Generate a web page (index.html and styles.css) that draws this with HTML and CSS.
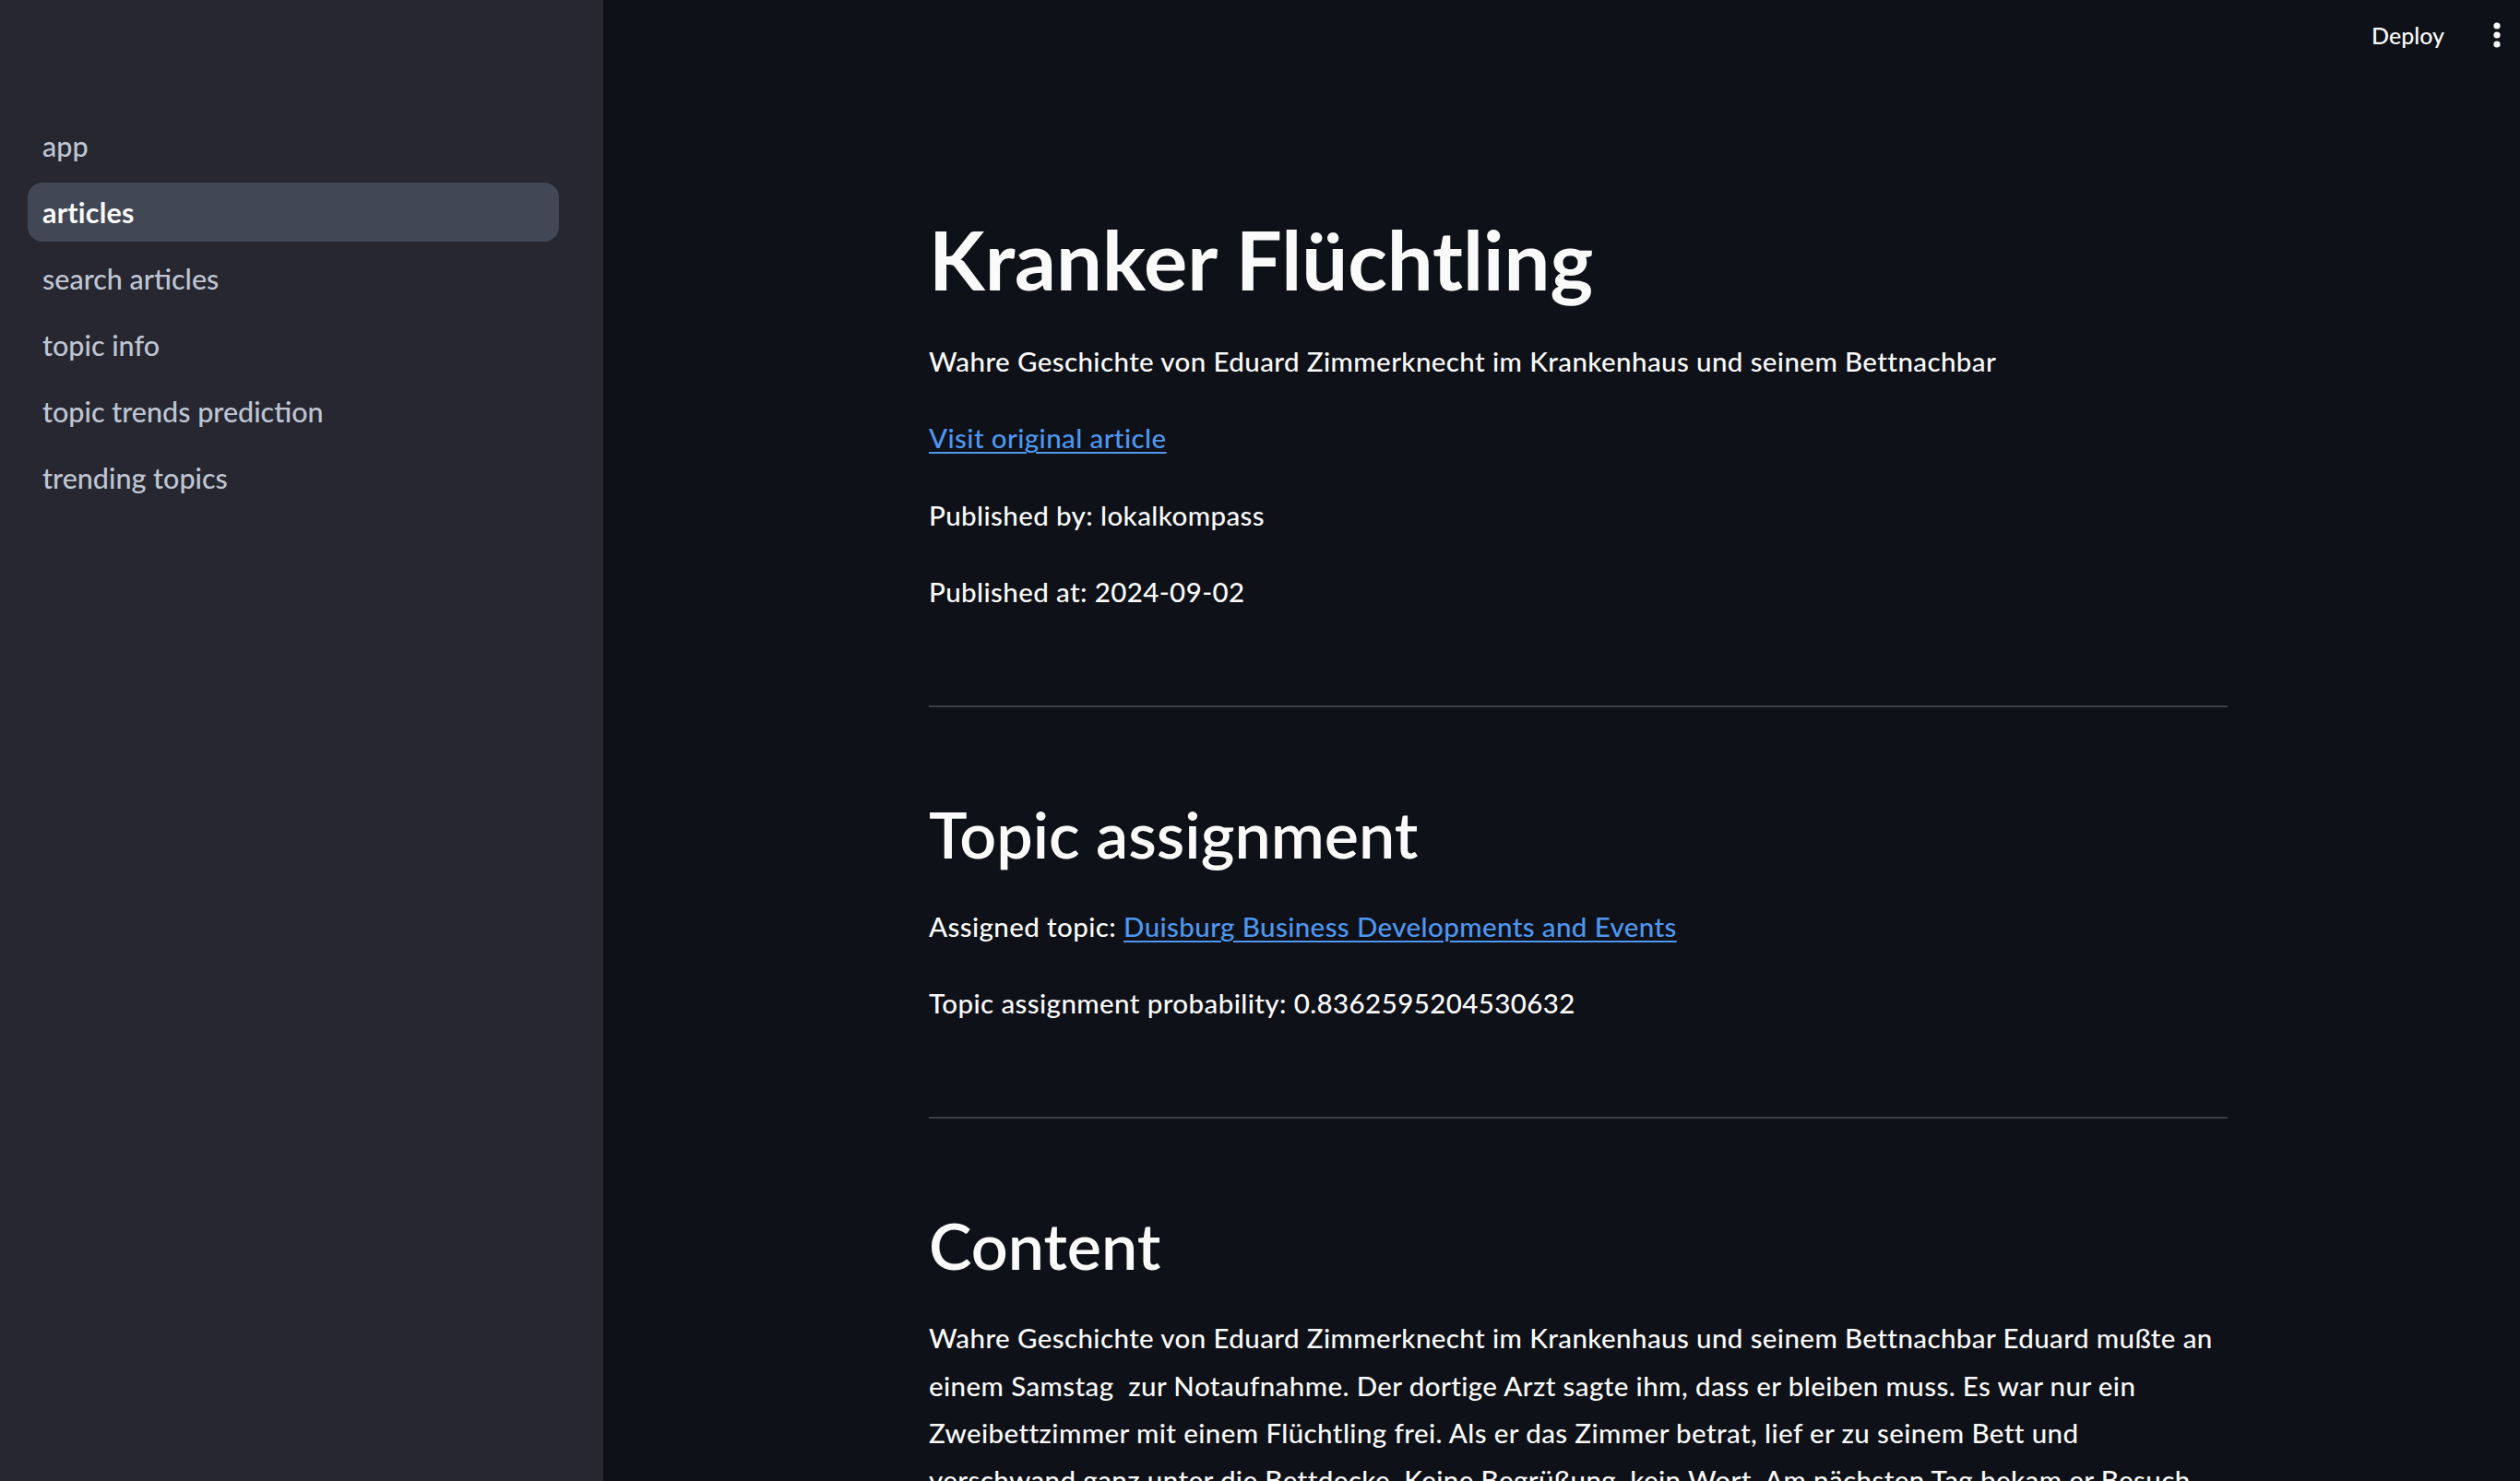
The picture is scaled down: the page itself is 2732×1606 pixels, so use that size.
FILE: index.html
```html
<!DOCTYPE html>
<html lang="de">
<head>
<meta charset="utf-8">
<title>articles</title>
<link rel="stylesheet" href="styles.css">
</head>
<body>
<div class="app">
  <aside class="sidebar">
    <nav class="nav">
      <a class="nav-item">app</a>
      <a class="nav-item active">articles</a>
      <a class="nav-item">search articles</a>
      <a class="nav-item">topic info</a>
      <a class="nav-item">topic trends prediction</a>
      <a class="nav-item">trending topics</a>
    </nav>
  </aside>
  <main class="main">
    <header class="topbar">
      <span class="deploy">Deploy</span>
      <span class="kebab" aria-label="menu">
        <svg width="10" height="30" viewBox="0 0 10 30"><circle cx="5" cy="5" r="3.6" fill="#fafafa"/><circle cx="5" cy="15" r="3.6" fill="#fafafa"/><circle cx="5" cy="25" r="3.6" fill="#fafafa"/></svg>
      </span>
    </header>
    <div class="block">
      <section class="group">
        <h1 class="title">Kranker Flüchtling</h1>
        <p>Wahre Geschichte von Eduard Zimmerknecht im Krankenhaus und seinem Bettnachbar</p>
        <p><a class="link" href="#">Visit original article</a></p>
        <p>Published by: lokalkompass</p>
        <p>Published at: 2024-09-02</p>
      </section>
      <hr class="divider">
      <section class="group">
        <h2 class="heading">Topic assignment</h2>
        <p>Assigned topic: <a class="link" href="#">Duisburg Business Developments and Events</a></p>
        <p>Topic assignment probability: 0.8362595204530632</p>
      </section>
      <hr class="divider">
      <section class="group">
        <h2 class="heading">Content</h2>
        <p class="body-text">Wahre Geschichte von Eduard Zimmerknecht im Krankenhaus und seinem Bettnachbar Eduard mußte an einem Samstag&nbsp; zur Notaufnahme. Der dortige Arzt sagte ihm, dass er bleiben muss. Es war nur ein Zweibettzimmer mit einem Flüchtling frei. Als er das Zimmer betrat, lief er zu seinem Bett und verschwand ganz unter die Bettdecke. Keine Begrüßung, kein Wort. Am nächsten Tag bekam er Besuch von seiner Familie.</p>
      </section>
    </div>
  </main>
</div>
</body>
</html>
```
FILE: styles.css
```css
html, body {
  margin: 0;
  padding: 0;
  height: 100%;
  overflow: hidden;
}
body {
  font-family: "Lato", "Noto Sans", sans-serif;
  background: #0e1117;
  color: #fafafa;
}
.app {
  display: flex;
  height: 100vh;
}
.sidebar {
  width: 654px;
  flex: 0 0 654px;
  background: #262730;
  box-sizing: border-box;
  padding: 126px 48px 0 30px;
}
.nav {
  display: flex;
  flex-direction: column;
  gap: 8px;
}
.nav-item {
  display: flex;
  align-items: center;
  height: 64px;
  padding: 0 16px;
  border-radius: 16px;
  font-size: 30.5px;
  font-weight: 500;
  color: #bfc5d3;
  cursor: pointer;
}
.nav-item.active {
  background: rgba(151, 166, 195, 0.25);
  color: #fafafa;
  font-weight: 700;
  letter-spacing: 0.2px;
}
.main {
  flex: 1;
  display: flex;
  flex-direction: column;
  min-width: 0;
}
.topbar {
  flex: 0 0 76px;
  height: 76px;
  display: flex;
  justify-content: flex-end;
  align-items: center;
  gap: 52px;
  padding-right: 20px;
}
.deploy {
  font-size: 25px;
  font-weight: 500;
  color: #fafafa;
}
.kebab {
  display: flex;
  align-items: center;
}
.block {
  flex: 0 0 auto;
  width: 1408px;
  margin-left: 353px;
  padding-top: 152px;
}
.group p {
  font-size: 29.5px;
  font-weight: 500;
  line-height: 51.2px;
  letter-spacing: 0.4px;
  margin: 0 0 32px;
}
.group p:last-child {
  margin-bottom: 0;
}
.title {
  font-size: 88.5px;
  font-weight: 700;
  line-height: 1.2;
  margin: 0 0 32px;
}
.heading {
  font-size: 70px;
  font-weight: 600;
  line-height: 1.2;
  margin: 0 0 33px;
}
.link {
  color: #4f97f0;
  text-decoration: underline;
  text-underline-offset: 4px;
  text-decoration-thickness: 2px;
}
.divider {
  border: none;
  height: 2px;
  background: #3d3f46;
  margin: 98px 0 95px;
}
```
